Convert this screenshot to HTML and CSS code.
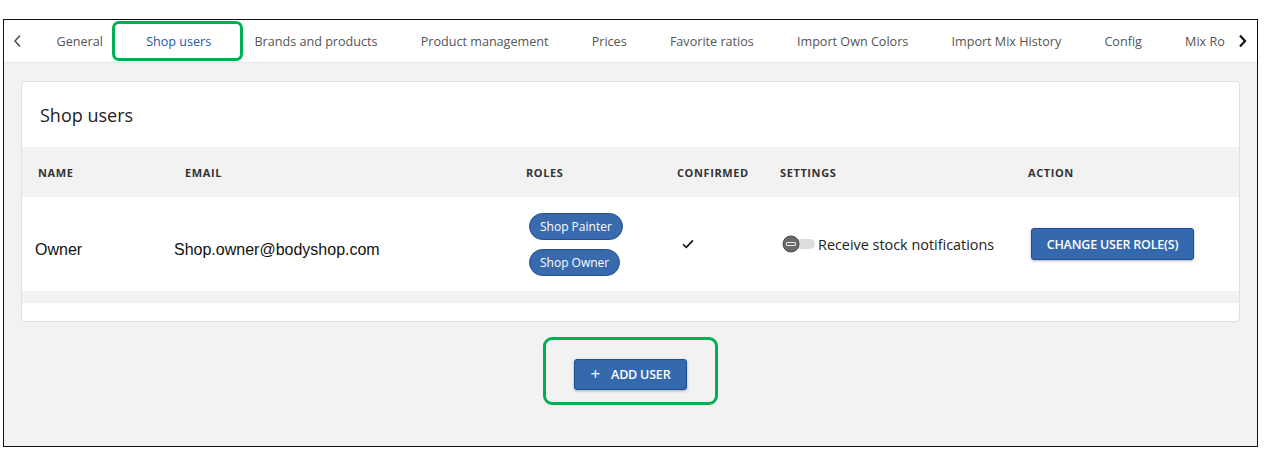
FILE: index.html
```html
<!DOCTYPE html>
<html lang="en">
<head>
    <meta charset="UTF-8">
    <title>Shop users</title>
    <link rel="stylesheet" href="styles.css">
</head>
<body>
    <div class="frame">
        <div class="tabbar">
            <div class="tab-arrow left">
                <svg width="10" height="14" viewBox="0 0 10 14"><path d="M7 1.5 L2 7 L7 12.5" fill="none" stroke="#444" stroke-width="1.4"/></svg>
            </div>
            <div class="tabs">
                <div class="tab">General</div>
                <div class="tab active">Shop users</div>
                <div class="tab">Brands and products</div>
                <div class="tab">Product management</div>
                <div class="tab">Prices</div>
                <div class="tab">Favorite ratios</div>
                <div class="tab">Import Own Colors</div>
                <div class="tab">Import Mix History</div>
                <div class="tab">Config</div>
                <div class="tab">Mix Ro</div>
            </div>
            <div class="tab-arrow right">
                <svg width="10" height="14" viewBox="0 0 10 14"><path d="M3 1.5 L8 7 L3 12.5" fill="none" stroke="#111" stroke-width="2.2"/></svg>
            </div>
        </div>

        <div class="content">
            <div class="card">
                <div class="card-title">Shop users</div>

                <div class="grid head">
                    <div class="th th-name">NAME</div>
                    <div class="th th-email">EMAIL</div>
                    <div class="th">ROLES</div>
                    <div class="th">CONFIRMED</div>
                    <div class="th">SETTINGS</div>
                    <div class="th">ACTION</div>
                </div>

                <div class="grid row">
                    <div class="td td-text">Owner</div>
                    <div class="td td-text">Shop.owner@bodyshop.com</div>
                    <div class="td td-roles">
                        <span class="chip">Shop Painter</span>
                        <span class="chip">Shop Owner</span>
                    </div>
                    <div class="td td-check">
                        <svg width="12" height="10" viewBox="0 0 12 10"><path d="M1 5.2 L4.3 8.4 L11 1.4" fill="none" stroke="#111" stroke-width="1.6"/></svg>
                    </div>
                    <div class="td td-settings">
                        <span class="toggle">
                            <svg width="34" height="18" viewBox="0 0 34 18">
                                <rect x="8" y="4" width="25" height="10" rx="5" fill="#dedede"/>
                                <circle cx="9" cy="9" r="8" fill="#6a6a6a" stroke="#4a4a4a" stroke-width="1"/>
                                <rect x="4.5" y="7.5" width="9" height="3" rx="0.5" fill="none" stroke="#e8e8e8" stroke-width="1"/>
                            </svg>
                        </span>
                        Receive stock notifications
                    </div>
                    <div class="td td-action">
                        <button class="btn btn-role">CHANGE USER ROLE(S)</button>
                    </div>
                </div>

                <div class="band"></div>
                <div class="card-foot"></div>
            </div>

            <div class="add-wrap">
                <button class="btn btn-add"><span class="plus">+</span>ADD USER</button>
            </div>
        </div>
    </div>
</body>
</html>
```

FILE: styles.css
```css
body {
    margin: 0;
    background: #fff;
    font-family: 'Open Sans', sans-serif;
    color: #222;
}

.frame {
    margin: 19px 0 0 3px;
    width: 1253px;
    height: 426px;
    border: 1px solid #111;
    background: #f2f2f2;
    display: flex;
    flex-direction: column;
}

/* tab bar */
.tabbar {
    height: 42px;
    background: #fff;
    border-bottom: 1px solid #e6e6e6;
    display: flex;
    align-items: center;
}

.tab-arrow {
    display: flex;
    align-items: center;
    justify-content: center;
}

.tab-arrow.left {
    width: 31px;
    padding-right: 3px;
    box-sizing: border-box;
}

.tab-arrow.right {
    width: 24px;
    padding-right: 6px;
    box-sizing: border-box;
}

.tabs {
    flex: 1;
    display: flex;
    height: 100%;
    overflow: hidden;
}

.tab {
    position: relative;
    padding: 0 21.6px;
    display: flex;
    align-items: center;
    font-size: 12.6px;
    color: #555;
    white-space: nowrap;
}

.tab.active {
    color: #2358a6;
}

.tab.active::after {
    content: "";
    position: absolute;
    top: 1px;
    bottom: 1px;
    left: -13px;
    right: -10px;
    border: 3px solid #00b050;
    border-radius: 7px;
}

/* content */
.content {
    flex: 1;
    padding: 18px 17px 0 17px;
}

.card {
    background: #fff;
    border: 1px solid #e0e0e0;
    border-radius: 4px;
}

.card-title {
    height: 65px;
    padding-left: 18px;
    display: flex;
    align-items: center;
    font-size: 18px;
    color: #222;
}

.grid {
    display: grid;
    grid-template-columns: 139px 352px 151px 103px 248px 1fr;
    padding-left: 13px;
}

.head {
    height: 50px;
    background: #f2f2f2;
    align-items: center;
}

.th {
    font-size: 11px;
    font-weight: 700;
    letter-spacing: 0.6px;
    color: #333;
}

.th-name {
    padding-left: 3px;
}

.th-email {
    padding-left: 11px;
}

.row {
    height: 94px;
    align-items: center;
}

.td-text {
    font-family: 'Liberation Sans', Arial, sans-serif;
    font-size: 16px;
    color: #111;
    padding-top: 11px;
}

.td-roles {
    padding-left: 3px;
    display: flex;
    flex-direction: column;
    align-items: flex-start;
    gap: 9px;
}

.chip {
    display: inline-block;
    height: 25px;
    line-height: 25px;
    padding: 0 10px;
    background: #3a6aae;
    border: 1px solid #1f4f95;
    border-radius: 14px;
    color: #fff;
    font-size: 12px;
}

.td-check {
    padding-left: 5px;
    display: flex;
}

.td-settings {
    padding-left: 2px;
    display: flex;
    align-items: center;
    font-size: 14.4px;
    color: #222;
}

.toggle {
    display: flex;
    margin-right: 2px;
}

.td-action {
    padding-left: 3px;
}

.btn {
    font-family: 'Open Sans', sans-serif;
    font-size: 12.5px;
    font-weight: 600;
    letter-spacing: -0.2px;
    color: #fff;
    background: #3569ad;
    border: 1px solid #1d4d92;
    border-radius: 3px;
    height: 32px;
    padding: 0 13px;
    box-shadow: 0 1px 3px rgba(0, 0, 0, 0.3);
}

.btn-role {
    width: 163px;
    padding: 0;
}

.band {
    height: 12px;
    background: #f2f2f2;
}

.card-foot {
    height: 18px;
}

/* add user */
.add-wrap {
    width: fit-content;
    margin: 15px auto 0;
    padding: 19px 28px 12px;
    border: 3px solid #00b050;
    border-radius: 9px;
    display: flex;
}

.btn-add {
    height: 31px;
    width: 113px;
    padding: 0;
    display: flex;
    align-items: center;
    justify-content: center;
}

.plus {
    font-size: 17px;
    font-weight: 400;
    margin-right: 11px;
    margin-top: -2px;
}
```
